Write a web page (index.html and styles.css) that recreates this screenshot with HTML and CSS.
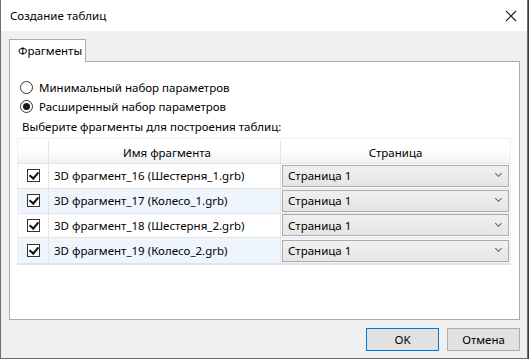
FILE: index.html
```html
<!DOCTYPE html>
<html lang="ru">
<head>
    <meta charset="UTF-8">
    <title>Создание таблиц</title>
    <link rel="stylesheet" href="styles.css">
</head>
<body>
    <div class="window">
        <!-- Заголовок окна -->
        <div class="title-bar">
            <span class="title">Создание таблиц</span>
            <svg class="close" width="12" height="12" viewBox="0 0 12 12">
                <path d="M1 1 L11 11 M11 1 L1 11" stroke="#1a1a1a" stroke-width="1.1" fill="none"/>
            </svg>
        </div>

        <div class="dialog-body">
            <div class="tabs">
                <div class="tab active">Фрагменты</div>
            </div>

            <div class="tab-panel">
                <label class="radio-row">
                    <span class="radio"></span>
                    Минимальный набор параметров
                </label>
                <label class="radio-row">
                    <span class="radio checked"></span>
                    Расширенный набор параметров
                </label>
                <div class="hint">Выберите фрагменты для построения таблиц:</div>

                <div class="grid">
                    <div class="grid-head">
                        <div class="cell cell-check"></div>
                        <div class="cell cell-name">Имя фрагмента</div>
                        <div class="cell cell-page">Страница</div>
                    </div>
                    <div class="grid-row">
                        <div class="cell cell-check"><span class="checkbox"></span></div>
                        <div class="cell cell-name">3D фрагмент_16 (Шестерня_1.grb)</div>
                        <div class="cell cell-page"><div class="combo">Страница 1<span class="arrow"></span></div></div>
                    </div>
                    <div class="grid-row alt">
                        <div class="cell cell-check"><span class="checkbox"></span></div>
                        <div class="cell cell-name">3D фрагмент_17 (Колесо_1.grb)</div>
                        <div class="cell cell-page"><div class="combo">Страница 1<span class="arrow"></span></div></div>
                    </div>
                    <div class="grid-row">
                        <div class="cell cell-check"><span class="checkbox"></span></div>
                        <div class="cell cell-name">3D фрагмент_18 (Шестерня_2.grb)</div>
                        <div class="cell cell-page"><div class="combo">Страница 1<span class="arrow"></span></div></div>
                    </div>
                    <div class="grid-row alt">
                        <div class="cell cell-check"><span class="checkbox"></span></div>
                        <div class="cell cell-name">3D фрагмент_19 (Колесо_2.grb)</div>
                        <div class="cell cell-page"><div class="combo">Страница 1<span class="arrow"></span></div></div>
                    </div>
                </div>
            </div>

            <div class="buttons">
                <button class="btn default">OK</button>
                <button class="btn">Отмена</button>
            </div>
        </div>
    </div>
</body>
</html>
```

FILE: styles.css
```css
* {
    box-sizing: border-box;
}

html, body {
    margin: 0;
    padding: 0;
    background-color: #3b3b3b;
}

body {
    font-family: 'Noto Sans', 'Open Sans', sans-serif;
    font-size: 11.5px;
    color: #000;
    width: 529px;
    height: 359px;
}

/* Окно */
.window {
    width: 528px;
    height: 359px;
    border: 1px solid #6e6e6e;
    border-top: none;
    display: flex;
    flex-direction: column;
    background-color: #f0f0f0;
}

.title-bar {
    height: 31px;
    background-color: #fff;
    display: flex;
    align-items: center;
    justify-content: space-between;
    padding: 0 9px 0 9px;
}

.title {
    color: #000;
}

.close {
    margin-right: 1px;
}

/* Тело диалога */
.dialog-body {
    flex: 1;
    padding: 8px 7px 0 8px;
    display: flex;
    flex-direction: column;
}

.tabs {
    display: flex;
    height: 22px;
}

.tab {
    width: 77px;
    height: 23px;
    background-color: #fff;
    border: 1px solid #acacac;
    border-bottom: none;
    padding: 3px 0 0 8px;
    position: relative;
    z-index: 1;
}

.tab-panel {
    height: 259px;
    background-color: #fff;
    border: 1px solid #acacac;
    padding: 16px 8px 0 7px;
}

/* Радиокнопки */
.radio-row {
    display: flex;
    align-items: center;
    height: 19px;
    padding-left: 3px;
}

.radio {
    width: 13px;
    height: 13px;
    border: 1px solid #333;
    border-radius: 50%;
    margin-right: 6px;
    display: flex;
    align-items: center;
    justify-content: center;
    background-color: #fff;
}

.radio.checked::after {
    content: '';
    width: 7px;
    height: 7px;
    border-radius: 50%;
    background-color: #1a1a1a;
}

.hint {
    height: 19px;
    padding-top: 3px;
    padding-left: 5px;
}

/* Таблица */
.grid {
    margin-top: 3px;
    border: 1px solid #f0f0f0;
    border-bottom: 2px solid #e2e2e2;
    width: 494px;
}

.grid-head,
.grid-row {
    display: flex;
}

.grid-head {
    height: 25px;
    padding-top: 2px;
    background: linear-gradient(#fff 0%, #fff 40%, #f1f2f3 100%);
    border-bottom: 1px solid #e5e5e5;
}

.grid-row {
    height: 24.75px;
    border-bottom: 1px solid #e5e5e5;
}

.grid-row:last-child {
    border-bottom: none;
}

.grid-row.alt {
    background-color: #eef5fd;
}

.cell {
    display: flex;
    align-items: center;
    border-right: 1px solid #e5e5e5;
}

.cell:last-child {
    border-right: none;
}

.cell-check {
    width: 31px;
    justify-content: center;
}

.cell-name {
    width: 232px;
    padding-left: 5px;
}

.grid-head .cell-name,
.grid-head .cell-page {
    justify-content: center;
}

.cell-page {
    flex: 1;
    padding: 0 1px;
}

.checkbox {
    width: 13px;
    height: 13px;
    border: 1px solid #333;
    background-color: #fff;
    position: relative;
}

.checkbox::after {
    content: '';
    position: absolute;
    left: 3px;
    top: 0px;
    width: 4px;
    height: 7px;
    border-right: 2px solid #111;
    border-bottom: 2px solid #111;
    transform: rotate(40deg);
}

.combo {
    width: 100%;
    height: 22px;
    border: 1px solid #acacac;
    background: linear-gradient(#f0f0f0, #e5e5e5);
    display: flex;
    align-items: center;
    justify-content: space-between;
    padding: 0 7px 0 5px;
}

.arrow {
    width: 5px;
    height: 5px;
    border-right: 1px solid #666;
    border-bottom: 1px solid #666;
    transform: rotate(45deg);
    margin-top: -4px;
}

/* Кнопки */
.buttons {
    display: flex;
    justify-content: flex-end;
    gap: 8px;
    padding-top: 8px;
}

.btn {
    width: 73px;
    height: 23px;
    font-family: inherit;
    font-size: 11.5px;
    background-color: #e1e1e1;
    border: 1px solid #adadad;
    padding: 0;
    color: #000;
}

.btn.default {
    border-color: #0078d7;
}
```
